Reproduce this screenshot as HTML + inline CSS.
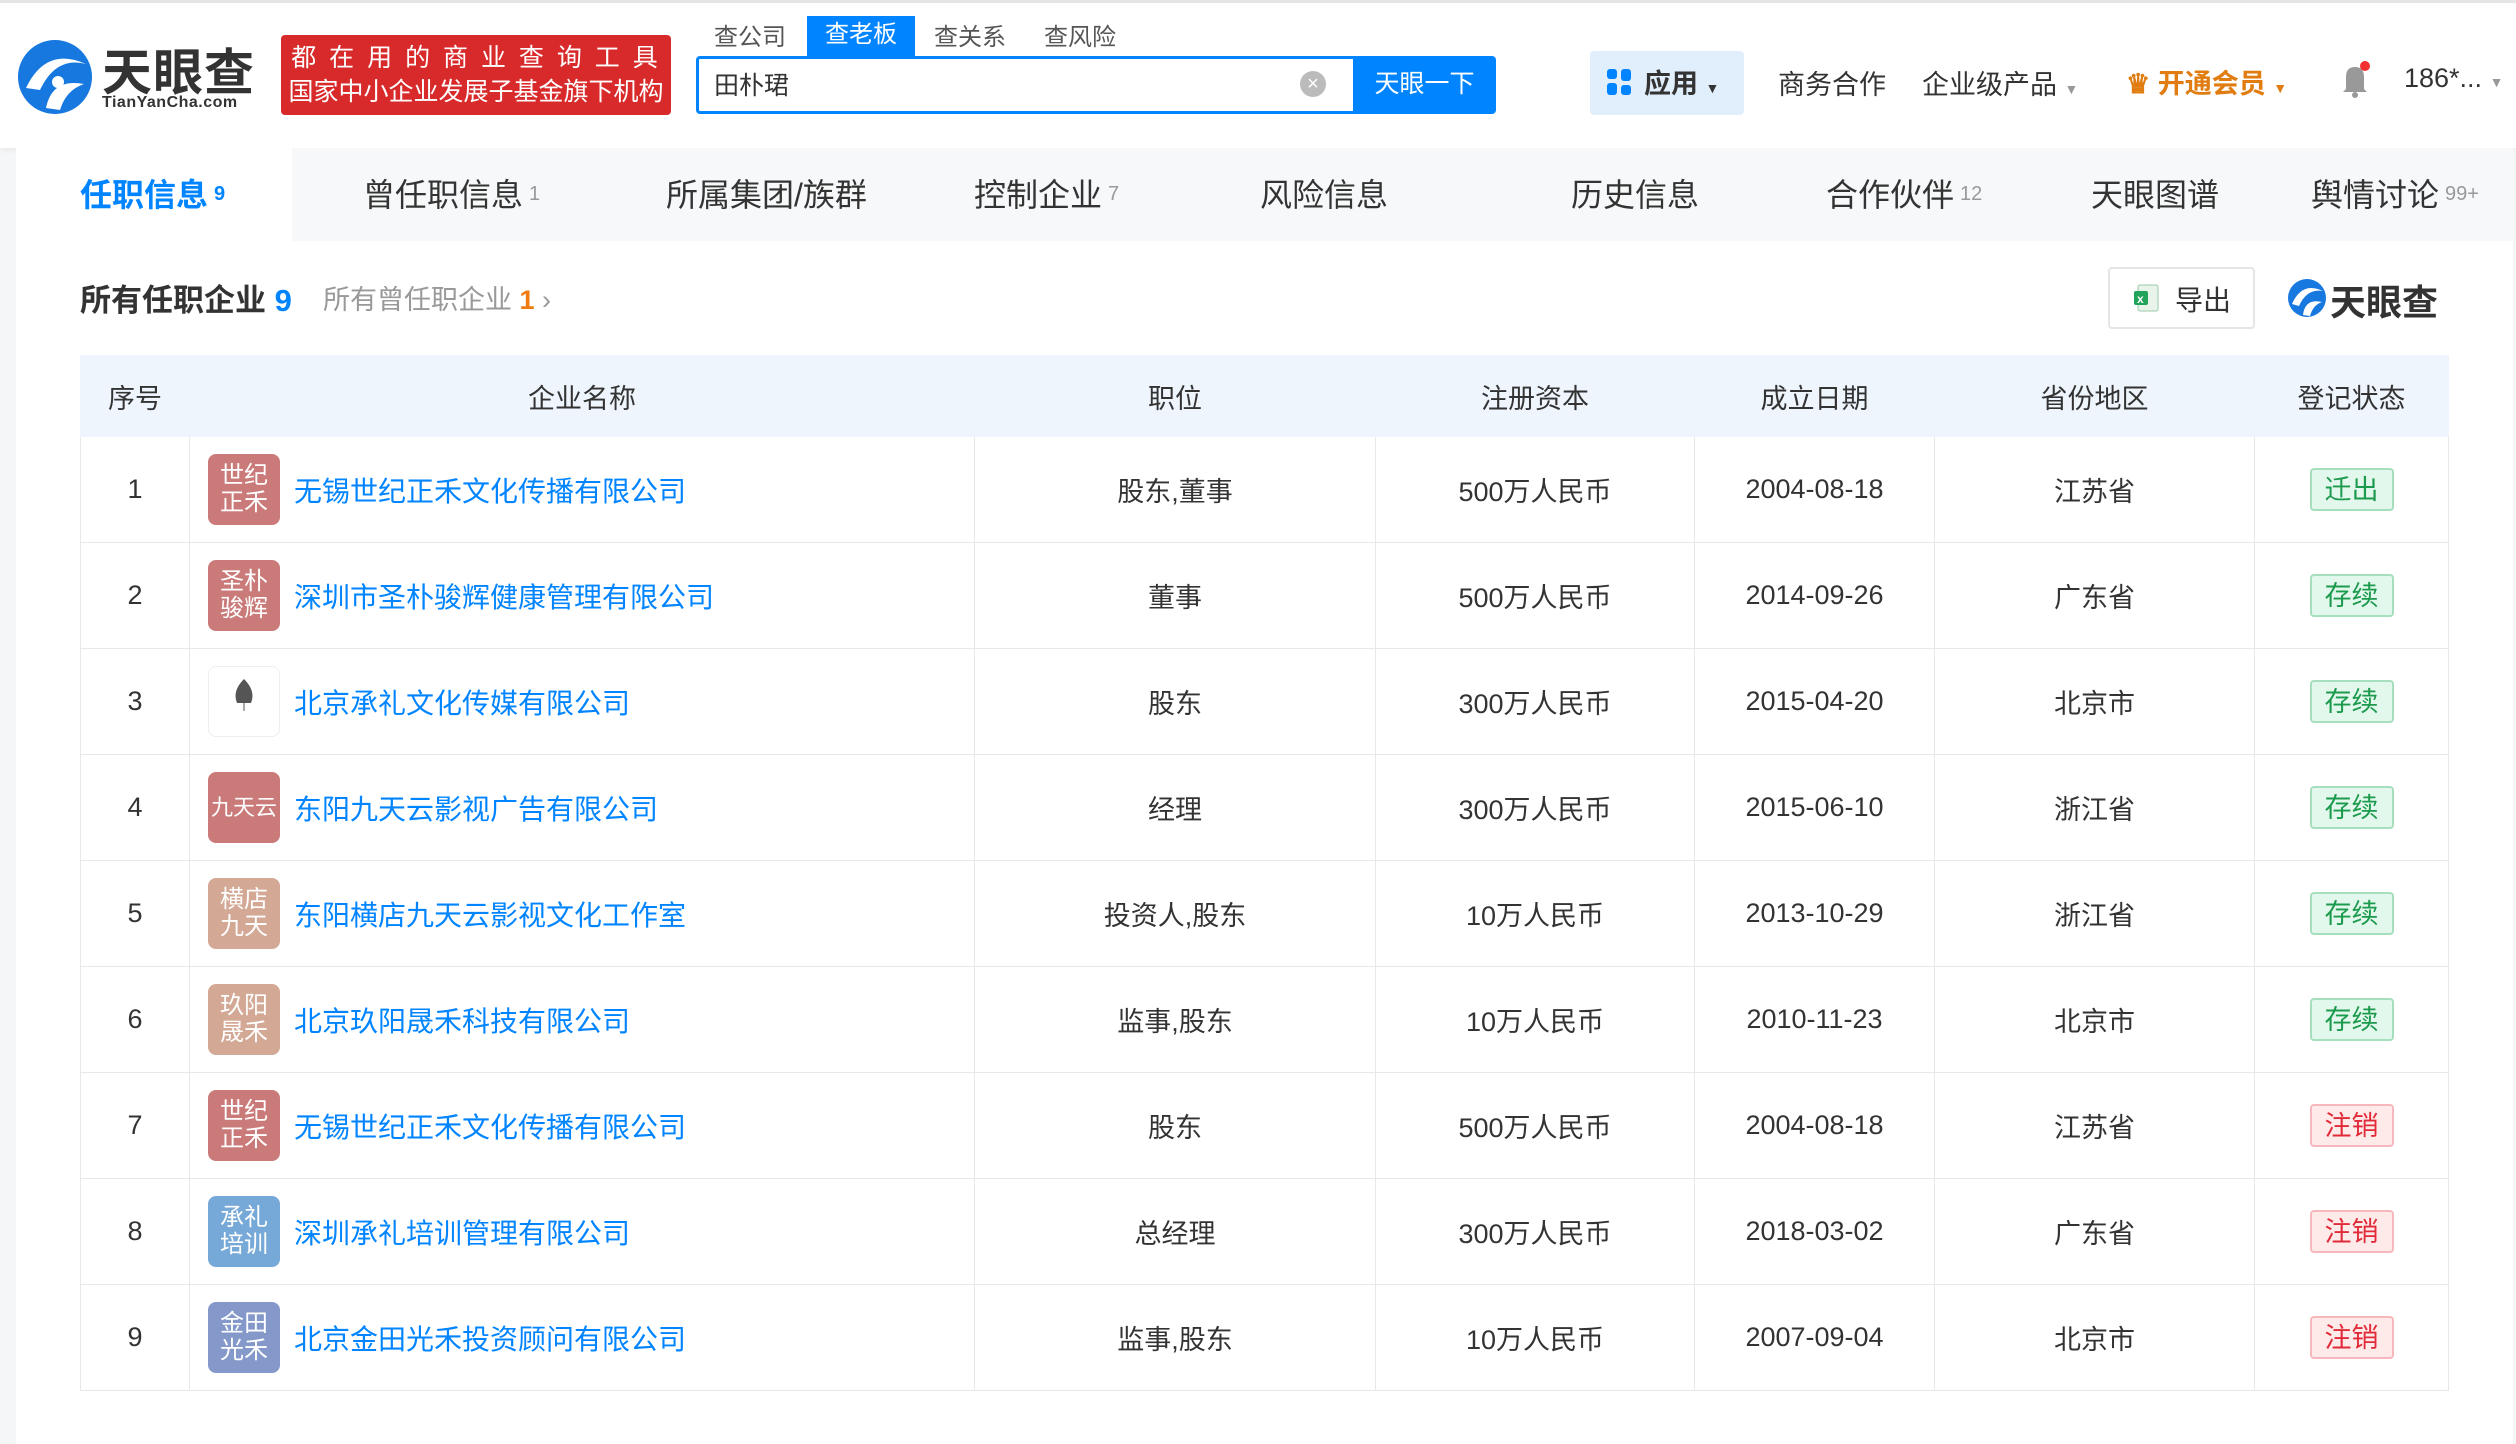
<!DOCTYPE html>
<html><head><meta charset="utf-8"><style>
*{margin:0;padding:0;box-sizing:border-box}
body{width:2516px;height:1444px;background:#f5f6f8;font-family:"Liberation Sans","Noto Sans CJK SC",sans-serif;color:#333;position:relative;overflow:hidden}
.a{position:absolute;white-space:nowrap}
#hdr{position:absolute;left:0;top:0;width:2516px;height:148px;background:#fff;border-top:3px solid #e5e5e5;box-shadow:0 2px 6px rgba(0,0,0,.06)}
#nav{position:absolute;left:16px;top:148px;width:2497px;height:93px;background:#f7f8fa}
.nt{position:absolute;top:22px;font-size:32px;color:#333}
.nt sup{font-size:20px;color:#999;vertical-align:6px;margin-left:6px}
#main{position:absolute;left:16px;top:241px;width:2497px;height:1203px;background:#fff}
table{position:absolute;left:80px;top:355px;border-collapse:collapse;font-size:27px;color:#333}
td,th{border:1px solid #e8e8e8;text-align:center;height:106px;font-weight:normal}
th{background:#eef5fd;height:81px;border-color:#eef5fd;font-size:27px}
.lg{display:inline-block;width:72px;height:71px;border-radius:8px;color:#fff;font-size:24px;line-height:27px;padding-top:8px;vertical-align:middle;text-align:center}
.cn{color:#0084ff;font-size:28px;vertical-align:middle;margin-left:14px}
.nm{text-align:left;padding-left:18px}
.tg{display:inline-block;width:84px;height:43px;line-height:41px;border-radius:4px;font-size:27px}
.g{background:#e3f8ec;border:2px solid #a6dfbd;color:#1c9a4d}
.r{background:#ffeaea;border:2px solid #f6b8bd;color:#e02b38}
</style></head><body>
<div id="hdr">
 <svg class="a" style="left:16px;top:35px" width="78" height="78" viewBox="0 0 78 78"><circle cx="39" cy="39" r="37" fill="#1778e0"/><path d="M10 50 Q30 8 70 26 Q40 18 24 52Z" fill="#fff"/><path d="M30 70 Q36 40 68 46 Q50 52 44 72Z" fill="#fff"/><circle cx="42" cy="44" r="6" fill="#fff"/></svg>
 <div class="a" style="left:102px;top:30px;font-size:50px;font-weight:bold;color:#333;letter-spacing:1px">天眼查</div>
 <div class="a" style="left:102px;top:91px;font-size:16px;font-weight:bold;color:#333;letter-spacing:0.5px">TianYanCha.com</div>
 <div class="a" style="left:281px;top:32px;width:390px;height:80px;background:#d82a2a;border-radius:4px;color:#fff;font-size:25px;line-height:34px;text-align:center;padding-top:6px"><span style="letter-spacing:3px">都 在 用 的 商 业 查 询 工 具</span><br>国家中小企业发展子基金旗下机构</div>
 <div class="a" style="left:714px;top:14px;font-size:24px;color:#555">查公司</div>
 <div class="a" style="left:807px;top:13px;width:108px;height:40px;background:#0084ff;color:#fff;font-size:24px;text-align:center;line-height:38px">查老板</div>
 <div class="a" style="left:934px;top:14px;font-size:24px;color:#555">查关系</div>
 <div class="a" style="left:1044px;top:14px;font-size:24px;color:#555">查风险</div>
 <div class="a" style="left:696px;top:53px;width:660px;height:58px;border:3px solid #0084ff;border-radius:4px 0 0 4px;background:#fff"></div>
 <div class="a" style="left:714px;top:63px;font-size:25px;color:#333">田朴珺</div>
 <div class="a" style="left:1300px;top:68px;width:26px;height:26px;border-radius:50%;background:#bbb;color:#fff;font-size:20px;text-align:center;line-height:26px">×</div>
 <div class="a" style="left:1353px;top:53px;width:143px;height:58px;background:#0084ff;border-radius:0 4px 4px 0;color:#fff;font-size:25px;text-align:center;line-height:56px">天眼一下</div>
 <div class="a" style="left:1590px;top:48px;width:154px;height:64px;background:#e1eefb;border-radius:4px"></div>
 <svg class="a" style="left:1607px;top:66px" width="26" height="28"><rect x="0" y="0" width="10" height="10" rx="3" fill="#0084ff"/><rect x="14" y="0" width="10" height="12" rx="3" fill="#0084ff"/><rect x="0" y="14" width="10" height="12" rx="3" fill="#0084ff"/><rect x="14" y="16" width="10" height="10" rx="3" fill="#0084ff"/></svg>
 <div class="a" style="left:1644px;top:59px;font-size:27px;font-weight:bold;color:#333">应用 <span style="font-size:14px">▼</span></div>
 <div class="a" style="left:1778px;top:60px;font-size:27px;color:#333">商务合作</div>
 <div class="a" style="left:1922px;top:60px;font-size:27px;color:#333">企业级产品 <span style="font-size:14px;color:#999">▼</span></div>
 <div class="a" style="left:2126px;top:59px;font-size:27px;font-weight:bold;color:#e07c10">♛ 开通会员 <span style="font-size:14px">▼</span></div>
 <svg class="a" style="left:2340px;top:58px" width="30" height="38"><path d="M6 28 V16 Q6 6 15 6 Q24 6 24 16 V28 L27 31 H3Z" fill="#999"/><circle cx="15" cy="34" r="3" fill="#999"/><circle cx="25" cy="5" r="5" fill="#f23030"/></svg>
 <div class="a" style="left:2404px;top:60px;font-size:27px;color:#333">186*... <span style="font-size:14px;color:#999">▼</span></div>
</div>
<div id="nav">
 <div class="a" style="left:0;top:0;width:276px;height:93px;background:#fff"></div>
 <div class="nt" style="left:64px;color:#0084ff;font-weight:bold">任职信息<sup style="color:#0084ff">9</sup></div>
 <div class="nt" style="left:347px">曾任职信息<sup>1</sup></div>
 <div class="nt" style="left:650px">所属集团/族群</div>
 <div class="nt" style="left:958px">控制企业<sup>7</sup></div>
 <div class="nt" style="left:1244px">风险信息</div>
 <div class="nt" style="left:1555px">历史信息</div>
 <div class="nt" style="left:1810px">合作伙伴<sup>12</sup></div>
 <div class="nt" style="left:2075px">天眼图谱</div>
 <div class="nt" style="left:2295px">舆情讨论<sup>99+</sup></div>
</div>
<div id="main"></div>
<div class="a" style="left:80px;top:275px;font-size:31px;font-weight:bold;color:#333">所有任职企业 <span style="color:#0084ff">9</span></div>
<div class="a" style="left:323px;top:278px;font-size:27px;color:#999">所有曾任职企业 <span style="color:#f07c10;font-weight:bold">1</span> ›</div>
<div class="a" style="left:2108px;top:267px;width:147px;height:62px;border:2px solid #e5e5e5;border-radius:4px;background:#fff"></div>
<svg class="a" style="left:2134px;top:284px" width="26" height="28"><rect x="4" y="1" width="20" height="26" rx="2" fill="#e8f3ea" stroke="#9bc9a5"/><rect x="0" y="7" width="14" height="14" rx="2" fill="#21a35a"/><text x="3" y="19" font-size="12" fill="#fff" font-family="Liberation Sans" font-weight="bold">x</text></svg>
<div class="a" style="left:2175px;top:279px;font-size:28px;color:#333">导出</div>
<svg class="a" style="left:2287px;top:278px" width="40" height="40"><circle cx="20" cy="20" r="19" fill="#1778e0"/><path d="M5 26 Q15 3 36 13 Q20 10 12 28Z" fill="#fff"/><path d="M16 37 Q18 20 35 24 Q26 27 23 38Z" fill="#fff"/></svg>
<div class="a" style="left:2330px;top:274px;font-size:36px;font-weight:bold;color:#333">天眼查</div>
<table>
<colgroup><col style="width:109px"><col style="width:785px"><col style="width:401px"><col style="width:319px"><col style="width:240px"><col style="width:320px"><col style="width:194px"></colgroup>
<tr><th>序号</th><th>企业名称</th><th>职位</th><th>注册资本</th><th>成立日期</th><th>省份地区</th><th>登记状态</th></tr>
<tr><td>1</td><td class="nm"><span class="lg" style="background:#c97a79">世纪<br>正禾</span><span class="cn">无锡世纪正禾文化传播有限公司</span></td><td>股东,董事</td><td>500万人民币</td><td>2004-08-18</td><td>江苏省</td><td><span class="tg g">迁出</span></td></tr>
<tr><td>2</td><td class="nm"><span class="lg" style="background:#c97a79">圣朴<br>骏辉</span><span class="cn">深圳市圣朴骏辉健康管理有限公司</span></td><td>董事</td><td>500万人民币</td><td>2014-09-26</td><td>广东省</td><td><span class="tg g">存续</span></td></tr>
<tr><td>3</td><td class="nm"><span class="lg" style="background:#fff;border:1px solid #eee;padding-top:10px"><svg width="30" height="40"><path d="M15 2 Q27 14 22 26 H8 Q3 14 15 2Z" fill="#555"/><line x1="15" y1="26" x2="15" y2="34" stroke="#555"/></svg></span><span class="cn">北京承礼文化传媒有限公司</span></td><td>股东</td><td>300万人民币</td><td>2015-04-20</td><td>北京市</td><td><span class="tg g">存续</span></td></tr>
<tr><td>4</td><td class="nm"><span class="lg" style="background:#c97a79;padding-top:22px;font-size:22px">九天云</span><span class="cn">东阳九天云影视广告有限公司</span></td><td>经理</td><td>300万人民币</td><td>2015-06-10</td><td>浙江省</td><td><span class="tg g">存续</span></td></tr>
<tr><td>5</td><td class="nm"><span class="lg" style="background:#d3a895">横店<br>九天</span><span class="cn">东阳横店九天云影视文化工作室</span></td><td>投资人,股东</td><td>10万人民币</td><td>2013-10-29</td><td>浙江省</td><td><span class="tg g">存续</span></td></tr>
<tr><td>6</td><td class="nm"><span class="lg" style="background:#d3a895">玖阳<br>晟禾</span><span class="cn">北京玖阳晟禾科技有限公司</span></td><td>监事,股东</td><td>10万人民币</td><td>2010-11-23</td><td>北京市</td><td><span class="tg g">存续</span></td></tr>
<tr><td>7</td><td class="nm"><span class="lg" style="background:#c97a79">世纪<br>正禾</span><span class="cn">无锡世纪正禾文化传播有限公司</span></td><td>股东</td><td>500万人民币</td><td>2004-08-18</td><td>江苏省</td><td><span class="tg r">注销</span></td></tr>
<tr><td>8</td><td class="nm"><span class="lg" style="background:#76a9d8">承礼<br>培训</span><span class="cn">深圳承礼培训管理有限公司</span></td><td>总经理</td><td>300万人民币</td><td>2018-03-02</td><td>广东省</td><td><span class="tg r">注销</span></td></tr>
<tr><td>9</td><td class="nm"><span class="lg" style="background:#8499c9">金田<br>光禾</span><span class="cn">北京金田光禾投资顾问有限公司</span></td><td>监事,股东</td><td>10万人民币</td><td>2007-09-04</td><td>北京市</td><td><span class="tg r">注销</span></td></tr>
</table>
</body></html>
